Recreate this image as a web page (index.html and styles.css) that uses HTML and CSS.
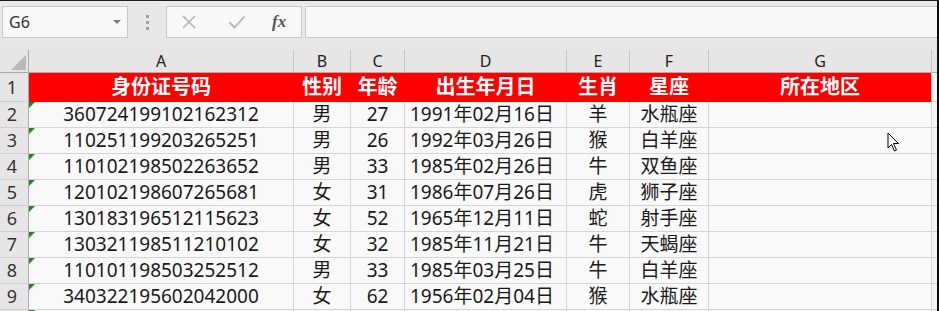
FILE: index.html
```html
<!DOCTYPE html>
<html lang="zh-CN">
<head>
    <meta charset="utf-8">
    <title>身份证信息表</title>
    <link rel="stylesheet" href="styles.css">
</head>
<body>
<div class="window">
    <!-- Name box + formula bar -->
    <div class="formula-bar">
        <div class="name-box">
            <span>G6</span>
            <span class="caret"></span>
        </div>
        <div class="grip"><i></i><i></i><i></i></div>
        <div class="fx-buttons">
            <svg class="btn-icon" width="16" height="16" viewBox="0 0 16 16">
                <path d="M2 2 L14 14 M14 2 L2 14" stroke="#b4b4b4" stroke-width="1.6" fill="none"/>
            </svg>
            <svg class="btn-icon" width="18" height="16" viewBox="0 0 18 16">
                <path d="M1.5 8.5 L6.5 13.5 L16.5 2.5" stroke="#b4b4b4" stroke-width="1.8" fill="none"/>
            </svg>
            <span class="fx">fx</span>
        </div>
        <div class="formula-input"></div>
    </div>

    <!-- Worksheet -->
    <div class="sheet">
        <div class="row col-head">
            <div class="corner"><span></span></div>
            <div class="ch">A</div>
            <div class="ch">B</div>
            <div class="ch">C</div>
            <div class="ch">D</div>
            <div class="ch">E</div>
            <div class="ch">F</div>
            <div class="ch">G</div>
        </div>
        <div class="row title-row">
            <div class="rh">1</div>
            <div class="c">身份证号码</div>
            <div class="c">性别</div>
            <div class="c">年龄</div>
            <div class="c">出生年月日</div>
            <div class="c">生肖</div>
            <div class="c">星座</div>
            <div class="c">所在地区</div>
        </div>
        <div class="row">
            <div class="rh">2</div>
            <div class="c id">360724199102162312</div>
            <div class="c">男</div>
            <div class="c">27</div>
            <div class="c date">1991年02月16日</div>
            <div class="c">羊</div>
            <div class="c">水瓶座</div>
            <div class="c"></div>
        </div>
        <div class="row">
            <div class="rh">3</div>
            <div class="c id">110251199203265251</div>
            <div class="c">男</div>
            <div class="c">26</div>
            <div class="c date">1992年03月26日</div>
            <div class="c">猴</div>
            <div class="c">白羊座</div>
            <div class="c"></div>
        </div>
        <div class="row">
            <div class="rh">4</div>
            <div class="c id">110102198502263652</div>
            <div class="c">男</div>
            <div class="c">33</div>
            <div class="c date">1985年02月26日</div>
            <div class="c">牛</div>
            <div class="c">双鱼座</div>
            <div class="c"></div>
        </div>
        <div class="row">
            <div class="rh">5</div>
            <div class="c id">120102198607265681</div>
            <div class="c">女</div>
            <div class="c">31</div>
            <div class="c date">1986年07月26日</div>
            <div class="c">虎</div>
            <div class="c">狮子座</div>
            <div class="c"></div>
        </div>
        <div class="row">
            <div class="rh">6</div>
            <div class="c id">130183196512115623</div>
            <div class="c">女</div>
            <div class="c">52</div>
            <div class="c date">1965年12月11日</div>
            <div class="c">蛇</div>
            <div class="c">射手座</div>
            <div class="c"></div>
        </div>
        <div class="row">
            <div class="rh">7</div>
            <div class="c id">130321198511210102</div>
            <div class="c">女</div>
            <div class="c">32</div>
            <div class="c date">1985年11月21日</div>
            <div class="c">牛</div>
            <div class="c">天蝎座</div>
            <div class="c"></div>
        </div>
        <div class="row">
            <div class="rh">8</div>
            <div class="c id">110101198503252512</div>
            <div class="c">男</div>
            <div class="c">33</div>
            <div class="c date">1985年03月25日</div>
            <div class="c">牛</div>
            <div class="c">白羊座</div>
            <div class="c"></div>
        </div>
        <div class="row">
            <div class="rh">9</div>
            <div class="c id">340322195602042000</div>
            <div class="c">女</div>
            <div class="c">62</div>
            <div class="c date">1956年02月04日</div>
            <div class="c">猴</div>
            <div class="c">水瓶座</div>
            <div class="c"></div>
        </div>
        <div class="row">
            <div class="rh"></div>
            <div class="c id"></div>
            <div class="c"></div>
            <div class="c"></div>
            <div class="c"></div>
            <div class="c"></div>
            <div class="c"></div>
            <div class="c"></div>
        </div>
    </div>

    <!-- Mouse pointer over the sheet -->
    <svg class="pointer" width="14" height="21" viewBox="0 0 14 21">
        <path d="M1 1 L1 16 L4.5 12.5 L7.5 19 L9.5 18 L6.5 11.5 L11.5 11.5 Z" fill="#fff" stroke="#000" stroke-width="1"/>
    </svg>
</div>
</body>
</html>
```

FILE: styles.css
```css
html, body {
    margin: 0;
    padding: 0;
}

body {
    width: 939px;
    height: 311px;
    overflow: hidden;
    font-family: "Noto Sans", "Noto Sans CJK SC", sans-serif;
    color: #1a1a1a;
}

.window {
    position: relative;
    width: 939px;
    height: 311px;
    box-sizing: border-box;
    border-top: 1px solid #1c1c1c;
    border-right: 2px solid #0e0e0e;
    background-color: #e8e8e8;
    overflow: hidden;
}

/* ---- formula bar ---- */

.formula-bar {
    display: flex;
    align-items: flex-start;
    height: 49px;
    box-sizing: border-box;
    padding: 5px 0 0 2px;
}

.name-box {
    display: flex;
    align-items: center;
    justify-content: space-between;
    width: 126px;
    height: 32px;
    box-sizing: border-box;
    padding: 0 6px 0 6px;
    background-color: #f8f8f8;
    border: 1px solid #c8c8c8;
    font-size: 16px;
    color: #333;
}

.caret {
    width: 0;
    height: 0;
    border-left: 4px solid transparent;
    border-right: 4px solid transparent;
    border-top: 4px solid #7a7a7a;
}

.grip {
    display: flex;
    flex-direction: column;
    gap: 3px;
    width: 38px;
    padding-top: 9px;
    align-items: center;
}

.grip i {
    display: block;
    width: 3px;
    height: 3px;
    background-color: #a0a0a0;
}

.fx-buttons {
    display: flex;
    align-items: center;
    width: 136px;
    height: 32px;
    box-sizing: border-box;
    padding-left: 14px;
    margin-right: 3px;
    background-color: #f8f8f8;
    border: 1px solid #c8c8c8;
}

.btn-icon {
    margin-right: 31px;
}

.fx-buttons svg:nth-child(2) {
    margin-right: 26px;
}

.fx {
    font-family: "Liberation Serif", serif;
    font-style: italic;
    font-weight: bold;
    font-size: 17px;
    color: #555;
}

.formula-input {
    flex: 1;
    height: 32px;
    box-sizing: border-box;
    background-color: #f8f8f8;
    border: 1px solid #c8c8c8;
    border-right: none;
}

/* ---- sheet grid ---- */

.row {
    display: grid;
    grid-template-columns: 29px 265px 57px 54px 162px 63px 79px 223px 5px;
    height: 26px;
}

.row > div {
    box-sizing: border-box;
    border-right: 1px solid #d4d4d4;
    border-bottom: 1px solid #d4d4d4;
    line-height: 25px;
    text-align: center;
    white-space: nowrap;
}

.row .c {
    background-color: #f9f9f9;
    font-size: 19px;
}

.row::after {
    content: "";
    background-color: #f4f4f4;
    border-bottom: 1px solid #d4d4d4;
}

.rh {
    background-color: #e6e6e6;
    border-right-color: #ababab !important;
    border-bottom-color: #cfcfcf !important;
    padding-right: 4px;
    font-size: 18px;
    color: #333;
}

.c.id {
    position: relative;
}

.c.id::before {
    content: "";
    position: absolute;
    left: 0;
    top: 0;
    border-top: 6px solid #1f8a1f;
    border-right: 6px solid transparent;
}

.c.date {
    text-align: left;
    padding-left: 5px;
}

/* column header row */

.col-head {
    height: 23px;
}

.col-head > div {
    background-color: #e6e6e6;
    border-right-color: #c4c4c4;
    border-bottom-color: #ababab;
    line-height: 22px;
    font-size: 16px;
    color: #222;
}

.col-head::after {
    background-color: #e6e6e6;
    border-bottom-color: #ababab;
}

.corner {
    position: relative;
    border-right-color: #ababab !important;
}

.corner span {
    position: absolute;
    right: 2px;
    bottom: 2px;
    border-bottom: 15px solid #b9b9b9;
    border-left: 15px solid transparent;
}

/* red title row */

.title-row {
    height: 29px;
}

.title-row .c {
    background-color: #ff0000;
    border-color: #ff0000;
    color: #fff;
    font-size: 20px;
    font-weight: bold;
    line-height: 27px;
}

.title-row .c:last-child {
    border-right-color: #d4d4d4;
}

.title-row .rh {
    line-height: 28px;
}

/* ---- pointer ---- */

.pointer {
    position: absolute;
    left: 887px;
    top: 131px;
}
```
